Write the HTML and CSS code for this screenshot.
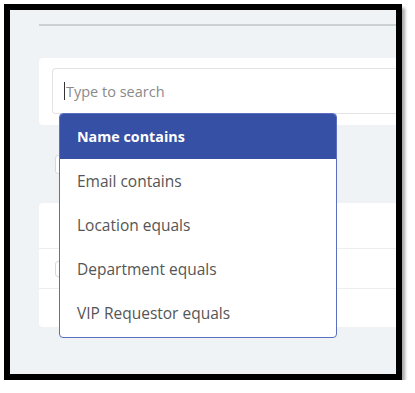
FILE: index.html
```html
<!DOCTYPE html>
<html lang="en">
<head>
  <meta charset="UTF-8" />
  <meta name="viewport" content="width=device-width, initial-scale=1"/>
  <title>Search filter</title>
  <link rel="stylesheet" href="styles.css">
</head>
<body>

<div class="frame">
  <div class="screen">
    <div class="rule"></div>

    <!-- search card -->
    <div class="card search-card">
      <div class="search-field">
        <div class="input"><span class="caret"></span><span class="placeholder">Type to search</span></div>
        <ul class="dropdown">
          <li class="opt selected">Name contains</li>
          <li class="opt">Email contains</li>
          <li class="opt">Location equals</li>
          <li class="opt">Department equals</li>
          <li class="opt">VIP Requestor equals</li>
        </ul>
      </div>
    </div>

    <div class="toolbar"><span class="chip"></span></div>

    <!-- results table behind the menu -->
    <div class="card table-card">
      <div class="row head"></div>
      <div class="row"><span class="check"></span></div>
      <div class="row last"></div>
    </div>
  </div>
</div>

</body>
</html>
```

FILE: styles.css
```css
body {
  margin: 0;
  background: #fff;
  font-family: 'Open Sans', Lato, sans-serif;
}
.frame {
  margin: 4px 0 0 4px;
  width: 386px; height: 364px;
  border: 6px solid #000;
  box-shadow: 3px 4px 3px rgba(0,0,0,0.35);
}
.screen {
  height: 100%;
  background: #eff3f6;
  padding-left: 29px;
  overflow: hidden;
  box-sizing: border-box;
}
.rule { margin-top: 14px; height: 2px; background: #cbd0d3; }
.card { background: #fff; border-radius: 4px 0 0 4px; }
.search-card {
  margin-top: 32px;
  padding: 10px 0 11px 13px;
}
.search-field { position: relative; }
.input {
  height: 44px;
  border: 1px solid #e1e4e6; border-right: none;
  border-radius: 4px 0 0 4px;
  display: flex; align-items: center;
  padding-left: 11px;
}
.caret { width: 1px; height: 18px; background: #333; margin-right: 1px; }
.placeholder { font-size: 14.5px; color: #8a8a8a; }
.dropdown {
  position: absolute; top: 45px; left: 7px;
  width: 276px;
  margin: 0; padding: 0 0 2px; list-style: none;
  background: #fff;
  border: 1px solid #5a6ec2;
  border-radius: 4px;
  overflow: hidden;
  z-index: 2;
}
.opt {
  height: 44px; line-height: 44px;
  padding-left: 17px;
  font-size: 15.5px; color: #555;
}
.opt.selected { height: 45px; line-height: 45px; background: #3550a5; color: #fff; font-weight: 700; font-size: 14.3px; }
.toolbar { height: 78px; display: flex; align-items: center; padding-left: 16px; }
.chip {
  width: 30px; height: 17px;
  border: 1px solid #d6dadd; border-radius: 3px;
  background: #fff;
}
.table-card { height: 124px; }
.row { height: 45px; border-bottom: 1px solid #eceff1; display: flex; align-items: center; padding-left: 16px; }
.row:nth-child(2) { height: 39px; }
.row.last { border-bottom: none; height: 38px; }
.check {
  width: 14px; height: 14px;
  border: 1px solid #d6dadd; border-radius: 3px;
}
```
